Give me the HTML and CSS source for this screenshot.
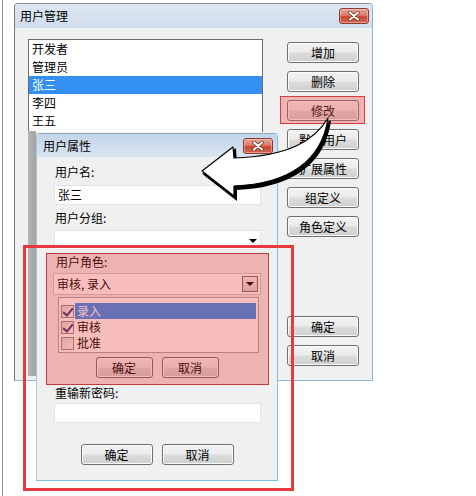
FILE: index.html
```html
<!DOCTYPE html>
<html>
<head>
<meta charset="utf-8">
<title>用户管理</title>
<link rel="stylesheet" href="styles.css">
</head>
<body>
<div class="screen">
  <div class="edge"></div>

  <div class="win main">
    <div class="titlebar">
      <span class="title">用户管理</span>
      <span class="close"><svg width="14" height="10" viewBox="0 0 14 10"><path d="M3 1.5 L11 8.5 M11 1.5 L3 8.5" stroke="#6b2a22" stroke-width="3.6" stroke-linecap="round"/><path d="M3 1.5 L11 8.5 M11 1.5 L3 8.5" stroke="#ffffff" stroke-width="2.2" stroke-linecap="round"/></svg></span>
    </div>
    <div class="main-body">
      <div class="listbox">
        <div class="item">开发者</div>
        <div class="item">管理员</div>
        <div class="item sel">张三</div>
        <div class="item">李四</div>
        <div class="item">王五</div>
      </div>
      <div class="btncol">
        <button class="btn">增加</button>
        <button class="btn">删除</button>
        <button class="btn">修改</button>
        <button class="btn">默认用户</button>
        <button class="btn">扩展属性</button>
        <button class="btn">组定义</button>
        <button class="btn">角色定义</button>
        <button class="btn btn-apart">确定</button>
        <button class="btn">取消</button>
      </div>
    </div>
    <div class="shadow-strip"></div>
    <div class="mark-edit"></div>
  </div>

  <div class="win dialog">
    <div class="titlebar dlg-title">
      <span class="title">用户属性</span>
      <span class="close"><svg width="14" height="10" viewBox="0 0 14 10"><path d="M3 1.5 L11 8.5 M11 1.5 L3 8.5" stroke="#6b2a22" stroke-width="3.6" stroke-linecap="round"/><path d="M3 1.5 L11 8.5 M11 1.5 L3 8.5" stroke="#ffffff" stroke-width="2.2" stroke-linecap="round"/></svg></span>
    </div>
    <div class="dlg-body">
      <div class="label l-first">用户名:</div>
      <div class="field">张三</div>
      <div class="label">用户分组:</div>
      <div class="field combo"><span class="caret"></span></div>

      <div class="popup">
        <div class="label p-label">用户角色:</div>
        <div class="pcombo">审核, 录入<span class="dropbtn"><span class="caret"></span></span></div>
        <div class="checklist">
          <div class="citem"><span class="cb checked"></span><span class="ctext sel">录入</span></div>
          <div class="citem"><span class="cb checked"></span><span class="ctext">审核</span></div>
          <div class="citem"><span class="cb"></span><span class="ctext">批准</span></div>
        </div>
        <div class="btnrow p-btns">
          <button class="btn sbtn">确定</button>
          <button class="btn sbtn">取消</button>
        </div>
      </div>

      <div class="label l-pwd">重输新密码:</div>
      <div class="field f-pwd"></div>
      <div class="btnrow dlg-btns">
        <button class="btn dbtn">确定</button>
        <button class="btn dbtn">取消</button>
      </div>
    </div>
  </div>

  <div class="redbox"></div>

  <svg class="arrow" width="476" height="496" viewBox="0 0 476 496">
    <path d="M328 118 C315 140 290 156 234 158 L233 147 L202 171 L234 196 L234 186 C290 184 322 160 328 118 Z" transform="translate(2 3)" fill="#000" stroke="#000" stroke-width="2"/>
    <path d="M328 118 C315 140 290 156 234 158 L233 147 L202 171 L234 196 L234 186 C290 184 322 160 328 118 Z" fill="#fff" stroke="#000" stroke-width="1.2" stroke-linejoin="round"/>
  </svg>
</div>
</body>
</html>
```

FILE: styles.css
```css
* { box-sizing: border-box; }

html, body {
  margin: 0;
  padding: 0;
  background: #ffffff;
}

body {
  font-family: "Noto Sans CJK SC", "Microsoft YaHei", sans-serif;
  font-size: 12px;
  color: #000;
}

.screen {
  position: relative;
  width: 476px;
  height: 496px;
  overflow: hidden;
  display: flex;
  align-items: flex-start;
}

.edge {
  align-self: stretch;
  width: 1px;
  margin-left: 2px;
  background: #8c8c8c;
}

.win {
  background: #f0f0f0;
  border: 1px solid #8db9d9;
  border-radius: 4px 4px 0 0;
}

.main {
  position: relative;
  margin-left: 11px;
  margin-top: 3px;
  width: 359px;
  height: 378px;
  border-left-color: #7a7a7a;
  border-top-color: #8e8e8e;
}

.titlebar {
  height: 24px;
  display: flex;
  align-items: center;
  justify-content: space-between;
  padding: 0 3px 0 5px;
  background: linear-gradient(#dde7f3, #cfdcec);
  border-radius: 3px 3px 0 0;
}

.title {
  font-size: 12px;
  line-height: 14px;
  margin-top: 0;
}

.close {
  width: 30px;
  height: 16px;
  border: 1px solid #8c3b31;
  border-radius: 3px;
  background: linear-gradient(#e8a596 0%, #dc7b68 45%, #c8442f 55%, #d36a55 100%);
  display: flex;
  align-items: center;
  justify-content: center;
  box-shadow: inset 0 0 0 1px rgba(255, 220, 210, 0.45);
}

.main-body {
  display: flex;
  gap: 24px;
  padding: 11px 13px 0 13px;
}

.listbox {
  width: 235px;
  height: 93px;
  background: #fff;
  border: 1px solid #6c6c6c;
  border-bottom: none;
}

.item {
  height: 18px;
  line-height: 18px;
  padding-left: 3px;
  font-size: 12px;
}

.item.sel {
  background: #3390f2;
  color: #fff;
}

.btncol {
  width: 72px;
  display: flex;
  flex-direction: column;
  gap: 8px;
  padding-top: 3px;
}

.btn {
  height: 21px;
  padding: 0;
  font-family: "Noto Sans CJK SC", "Microsoft YaHei", sans-serif;
  font-size: 12px;
  color: #000;
  border: 1px solid #707070;
  border-radius: 3px;
  background: linear-gradient(#f3f3f3 0%, #ebebeb 48%, #dcdcdc 52%, #cfcfcf 100%);
  box-shadow: inset 0 0 0 1px #fbfbfb;
  line-height: 18px;
}

.btncol .btn { width: 72px; }

.btn-apart { margin-top: 71px; }

.shadow-strip {
  position: absolute;
  left: 13px;
  top: 127px;
  width: 8px;
  height: 245px;
  background: linear-gradient(90deg, #b5b5b5, #a3a3a3);
}

.mark-edit {
  position: absolute;
  left: 265px;
  top: 92px;
  width: 85px;
  height: 28px;
  border: 1px solid #dc3c3c;
  background: rgba(238, 70, 70, 0.35);
}

/* dialog */
.dialog {
  position: absolute;
  left: 36px;
  top: 133px;
  width: 242px;
  height: 348px;
  border-color: #7fc0e2;
  border-top-color: #9aa9b8;
  border-left-color: #a9c7dc;
}

.dlg-title {
  height: 23px;
  padding: 0 4px 0 6px;
  background: linear-gradient(#c3d5ea, #d8e4f1);
}

.dlg-body {
  padding: 0 8px 0 9px;
}

.label {
  line-height: 14px;
  height: 14px;
  margin: 6px 8px 0 9px;
  font-size: 12px;
}

.l-first { margin-top: 8px; }

.field {
  position: relative;
  height: 20px;
  margin: 6px 8px 0 8px;
  background: #fff;
  border: 1px solid #e1e4e8;
  line-height: 18px;
  padding-left: 3px;
  font-size: 12px;
}

.combo { margin-top: 5px; }

.caret {
  position: absolute;
  right: 3px;
  top: 8px;
  width: 0;
  height: 0;
  border-left: 4px solid transparent;
  border-right: 4px solid transparent;
  border-top: 4px solid #000;
}

.popup {
  position: relative;
  margin-top: 3px;
  height: 132px;
  padding: 1px 7px 0 6px;
  border: 1px solid transparent;
}

.popup::after {
  content: "";
  position: absolute;
  inset: -1px;
  border: 1px solid #c23b3b;
  background: rgba(232, 40, 40, 0.3);
  pointer-events: none;
}

.p-label {
  margin: 0 0 0 3px;
}

.pcombo {
  position: relative;
  height: 22px;
  margin-top: 4px;
  background: #fff;
  border: 1px solid #c9c9c9;
  line-height: 20px;
  padding-left: 3px;
}

.dropbtn {
  position: absolute;
  right: 2px;
  top: 2px;
  width: 16px;
  height: 16px;
  border: 1px solid #6d6d6d;
  background: linear-gradient(#f2f2f2, #d8d8d8);
}

.dropbtn .caret {
  right: 3px;
  top: 5px;
}

.checklist {
  height: 56px;
  margin: 2px 2px 0 5px;
  background: #fff;
  border: 1px solid #a8a8a8;
  padding: 5px 0 0 2px;
}

.citem {
  height: 16px;
  display: flex;
  align-items: center;
}

.cb {
  position: relative;
  width: 13px;
  height: 13px;
  border: 1px solid #8f8f8f;
  background: linear-gradient(135deg, #dcdcdc, #fbfbfb);
  margin-right: 1px;
}

.cb.checked::after {
  content: "";
  position: absolute;
  left: 3px;
  top: 0px;
  width: 4px;
  height: 8px;
  border-right: 2px solid #3b3b6e;
  border-bottom: 2px solid #3b3b6e;
  transform: rotate(40deg);
}

.ctext {
  flex: 1;
  height: 16px;
  line-height: 16px;
  padding-left: 2px;
  margin-right: 2px;
}

.ctext.sel {
  background: #3390f2;
  color: #fff;
}

.btnrow {
  display: flex;
  justify-content: center;
  gap: 9px;
}

.p-btns { margin-top: 4px; }

.sbtn { width: 57px; }

.l-pwd { margin-top: 1px; }

.f-pwd { margin-top: 3px; }

.dlg-btns { margin-top: 21px; padding-right: 1px; }

.dbtn { width: 72px; }

.redbox {
  position: absolute;
  left: 23px;
  top: 245px;
  width: 271px;
  height: 246px;
  border: 3px solid #e63a3e;
}

.arrow {
  position: absolute;
  left: 0;
  top: 0;
  pointer-events: none;
}
```
